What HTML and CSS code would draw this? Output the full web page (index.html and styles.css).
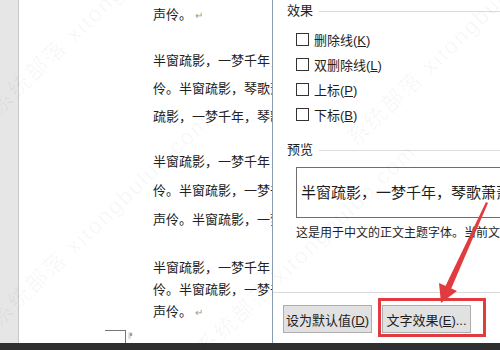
FILE: index.html
```html
<!DOCTYPE html>
<html>
  <head>
    <meta charset="utf-8" />
    <title>字体 - 文字效果</title>
    <link rel="stylesheet" href="styles.css">
  </head>

  <body>
    <div class="screen">
      <div class="gutter"></div>

      <div class="page">
        <div class="doc">
          <p class="para first">声伶。<span class="mark">↵</span></p>
          <p class="para p2">半窗疏影，一梦千年，琴歌萧萧<br />伶。半窗疏影，琴歌萧萧声伶<br />疏影，一梦千年，琴歌萧萧声</p>
          <p class="para p3">半窗疏影，一梦千年，琴歌萧萧<br />伶。半窗疏影，一梦千年，琴歌<br />声伶。半窗疏影，一梦千年</p>
          <p class="para p4">半窗疏影，一梦千年，琴歌萧萧<br />伶。半窗疏影，一梦千年，琴歌<br />声伶。<span class="mark">↵</span></p>
        </div>
        <div class="corner"><span>⁋</span></div>
      </div>

      <div class="dialog">
        <div class="group-title">效果</div>
        <div class="checks">
          <label class="check"><span class="box"></span><span>删除线(<u>K</u>)</span></label>
          <label class="check"><span class="box"></span><span>双删除线(<u>L</u>)</span></label>
          <label class="check"><span class="box"></span><span>上标(<u>P</u>)</span></label>
          <label class="check"><span class="box"></span><span>下标(<u>B</u>)</span></label>
        </div>

        <div class="group-title preview-title">预览</div>
        <div class="preview">半窗疏影，一梦千年，琴歌萧萧声伶</div>
        <p class="hint">这是用于中文的正文主题字体。当前文档主题定义</p>

        <div class="footer">
          <button class="btn">设为默认值(<u>D</u>)</button>
          <button class="btn">文字效果(<u>E</u>)...</button>
        </div>
      </div>
    </div>
    <div class="taskbar"></div>

    <!-- watermark -->
    <div class="wm wm1">系统部落 xitongbuluo.com</div>
    <div class="wm wm2">系统部落 xitongbuluo.com</div>
    <div class="wm wm3">系统部落 xitongbuluo.com</div>
    <div class="wm wm4">系统部落 xitongbuluo.com</div>

    <!-- annotation -->
    <svg class="note" width="500" height="350" viewBox="0 0 500 350">
      <rect x="379.5" y="299.5" width="105" height="36" fill="none" stroke="#e23b3f" stroke-width="3" />
      <polygon points="486,202 488,203 451,289 445,287" fill="#e23b3f" />
      <polygon points="441,303 439,283 457,291" fill="#e23b3f" />
    </svg>
  </body>
</html>
```

FILE: styles.css
```css
html {
  font-family: "Liberation Sans", "Noto Sans CJK SC", sans-serif;
  font-size: 13px;
  color: #1e1e1e;
}

body {
  margin: 0;
  width: 500px;
  height: 350px;
  overflow: hidden;
  position: relative;
  background: #fff;
}

.screen {
  display: flex;
  height: 343px;
}

.gutter {
  width: 18px;
  background: #e6e6e6;
  border-right: 1px solid #c9c9c9;
}

.page {
  width: 253px;
  background: #fff;
  overflow: hidden;
}

.doc {
  padding-left: 134px;
  white-space: nowrap;
  color: #222;
}

.para {
  margin: 0;
  line-height: 28px;
}

.first {
  margin-top: 1px;
}

.p2 {
  margin-top: 17px;
}

.p3 {
  margin-top: 16px;
  line-height: 29px;
}

.p4 {
  margin-top: 23px;
  line-height: 22px;
}

.mark {
  color: #9a9a9a;
  font-size: 10px;
  margin-left: 3px;
}

.corner {
  margin: 6px 0 0 86px;
  width: 20px;
  height: 14px;
  border-top: 1px solid #777;
  border-right: 1px solid #777;
}

.corner span {
  font-size: 7px;
  color: #999;
  margin-left: 23px;
  vertical-align: top;
}

.dialog {
  flex: 1;
  border-left: 1px solid #8a9cb2;
  display: flex;
  flex-direction: column;
  background: #fff;
  overflow: hidden;
}

.group-title {
  display: flex;
  align-items: center;
  gap: 6px;
  margin: 2px 0 0 14px;
  line-height: 18px;
  white-space: nowrap;
}

.group-title::after {
  content: "";
  flex: 1;
  border-top: 1px solid #dcdcdc;
}

.checks {
  margin-top: 7px;
  padding-left: 23px;
}

.check {
  display: flex;
  align-items: center;
  height: 25px;
  gap: 5px;
  white-space: nowrap;
}

.box {
  width: 11px;
  height: 11px;
  border: 1px solid #333;
  background: #fff;
}

.preview-title {
  margin-top: 14px;
}

.preview {
  margin: 8px 0 0 23px;
  height: 49px;
  border: 1px solid #6e6e6e;
  border-right: none;
  font-size: 15px;
  line-height: 49px;
  padding-left: 4px;
  white-space: nowrap;
}

.hint {
  margin: 7px 0 0 23px;
  font-size: 12px;
  line-height: 16px;
  white-space: nowrap;
}

.footer {
  margin-top: auto;
  border-top: 1px solid #dadada;
  height: 51px;
  display: flex;
  gap: 10px;
  padding: 12px 0 0 10px;
  box-sizing: border-box;
}

.btn {
  width: 89px;
  height: 28px;
  background: #e1e1e1;
  border: 1px solid #adadad;
  font-family: inherit;
  font-size: 13px;
  color: #1e1e1e;
  padding: 0;
  white-space: nowrap;
}

.taskbar {
  height: 7px;
  background: #2f2f2f;
}

.wm {
  position: absolute;
  font-size: 22px;
  letter-spacing: 2px;
  color: rgba(0, 0, 0, 0.04);
  white-space: nowrap;
  transform-origin: left bottom;
  transform: rotate(-44deg);
  pointer-events: none;
}

.wm1 {
  left: 4px;
  top: 88px;
}

.wm2 {
  left: 4px;
  top: 300px;
}

.wm3 {
  left: 360px;
  top: 120px;
}

.wm4 {
  left: 210px;
  top: 330px;
}

.note {
  position: absolute;
  left: 0;
  top: 0;
  pointer-events: none;
}
```
